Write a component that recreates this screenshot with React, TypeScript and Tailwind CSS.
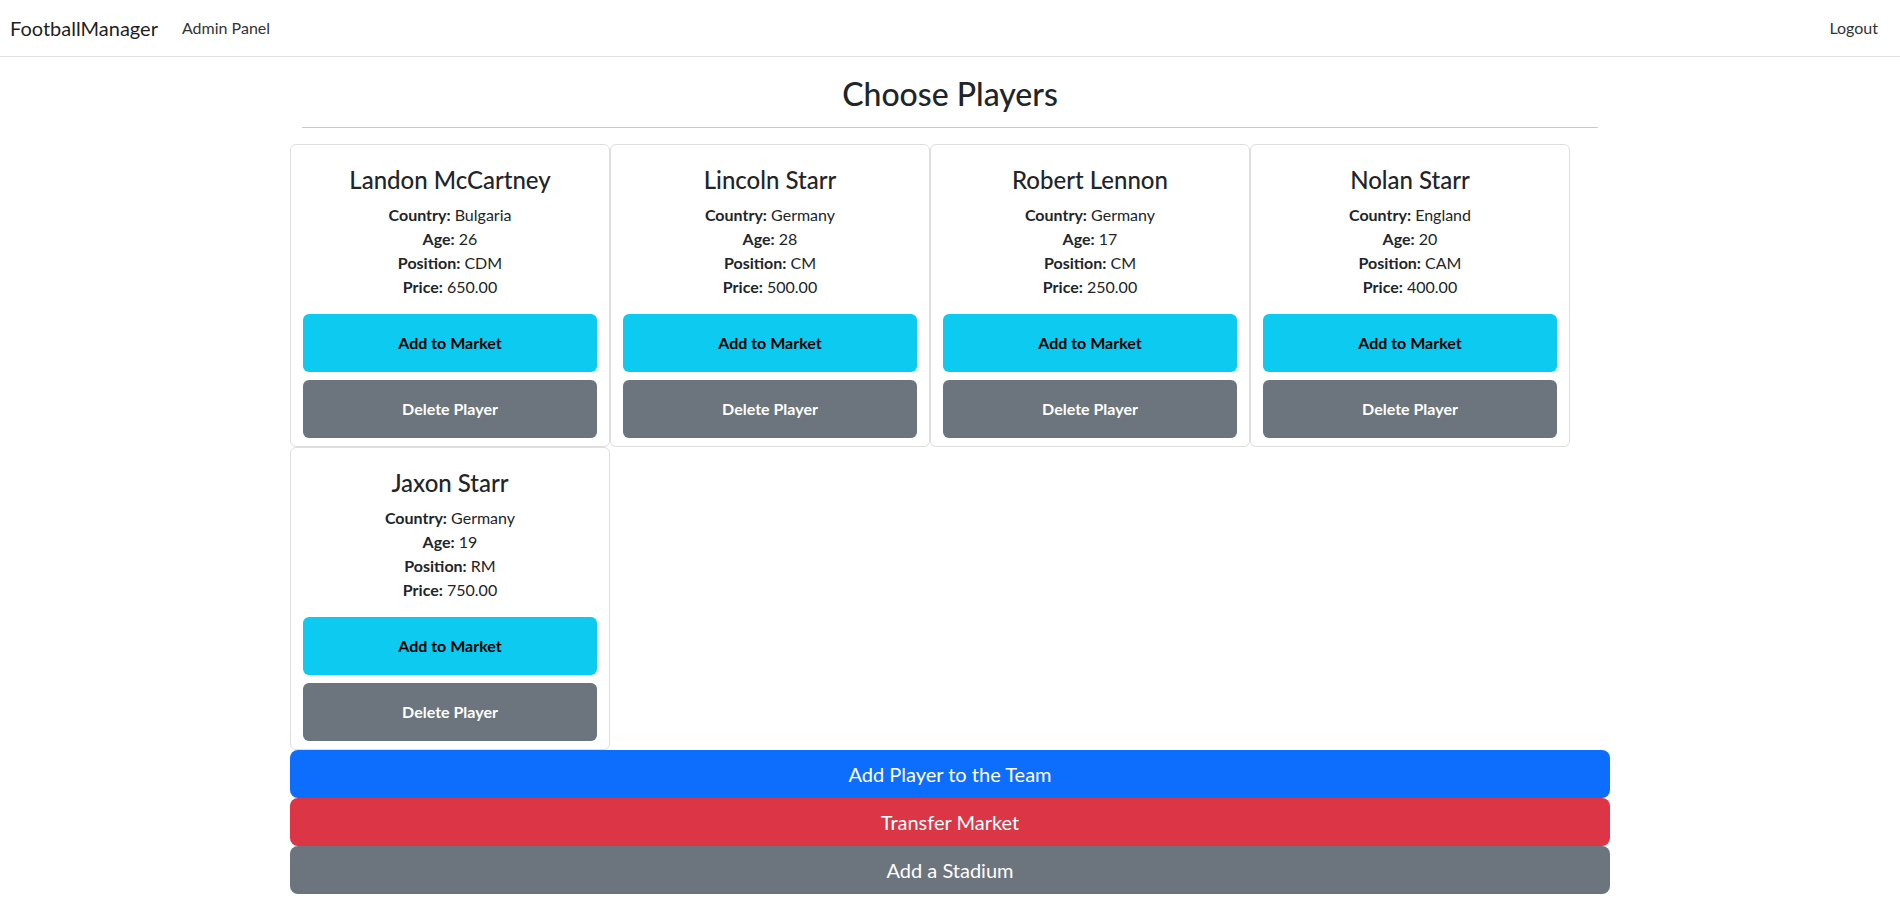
type Player = {
  name: string;
  country: string;
  age: number;
  position: string;
  price: string;
};

const players: Player[] = [
  { name: "Landon McCartney", country: "Bulgaria", age: 26, position: "CDM", price: "650.00" },
  { name: "Lincoln Starr", country: "Germany", age: 28, position: "CM", price: "500.00" },
  { name: "Robert Lennon", country: "Germany", age: 17, position: "CM", price: "250.00" },
  { name: "Nolan Starr", country: "England", age: 20, position: "CAM", price: "400.00" },
  { name: "Jaxon Starr", country: "Germany", age: 19, position: "RM", price: "750.00" },
];

function PlayerCard(props: Player) {
  return (
    <div className="w-[320px] border border-[#dfdfdf] rounded-[6px] bg-white px-[12px] pt-[21px] pb-[8px] text-center">
      <h4 className="text-[24px] leading-[1.2] font-medium mb-2">{props.name}</h4>
      <div className="text-base leading-6 mb-[15px]">
        <p><span className="font-bold">Country:</span> {props.country}</p>
        <p><span className="font-bold">Age:</span> {props.age}</p>
        <p><span className="font-bold">Position:</span> {props.position}</p>
        <p><span className="font-bold">Price:</span> {props.price}</p>
      </div>
      <button className="w-full h-[58px] rounded-[6px] bg-[#0dcaf0] text-black font-bold text-base">
        Add to Market
      </button>
      <button className="w-full h-[58px] mt-2 rounded-[6px] bg-[#6c757d] text-white font-bold text-base">
        Delete Player
      </button>
    </div>
  );
}

export default function App() {
  return (
    <div className="min-h-screen bg-white text-[#212529] font-['Lato',sans-serif]">
      <nav className="flex items-center justify-between h-[57px] border-b border-[#dee2e6] pl-[10px] pr-[22px]">
        <div className="flex items-center">
          <span className="text-[20px] text-black/90 mr-[16px]">FootballManager</span>
          <a className="text-base text-[#333] px-2">Admin Panel</a>
        </div>
        <a className="text-base text-[#333]">Logout</a>
      </nav>

      <main className="w-[1320px] mx-auto">
        <div className="px-3">
          <h2 className="text-[32px] leading-[1.2] font-medium text-center pt-[18px]">Choose Players</h2>
          <hr className="mt-[14px] border-t border-[#c8c9ca]" />
        </div>

        <div className="flex flex-wrap mt-[16px]">
          {players.map((p) => (
            <PlayerCard key={p.name} {...p} />
          ))}
        </div>

        <div className="flex flex-col">
          <button className="h-[48px] w-full rounded-[8px] bg-[#0d6efd] text-white text-[20px]">
            Add Player to the Team
          </button>
          <button className="h-[48px] w-full rounded-[8px] bg-[#dc3545] text-white text-[20px]">
            Transfer Market
          </button>
          <button className="h-[48px] w-full rounded-[8px] bg-[#6c757d] text-white text-[20px]">
            Add a Stadium
          </button>
        </div>
      </main>
    </div>
  );
}
